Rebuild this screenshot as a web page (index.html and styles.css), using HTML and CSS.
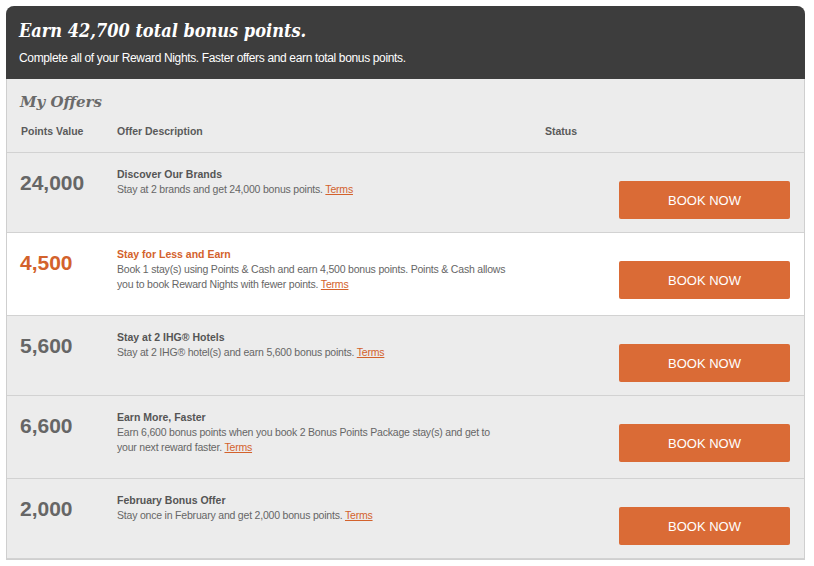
FILE: index.html
```html
<!DOCTYPE html>
<html>
<head>
    <title>My Offers</title>
    <link rel="stylesheet" href="styles.css">
</head>
<body>
    <div class="offers-panel">
        <div class="offers-banner">
            <h1>Earn 42,700 total bonus points.</h1>
            <p>Complete all of your Reward Nights. Faster offers and earn total bonus points.</p>
        </div>
        <div class="offers-head">
            <h2>My Offers</h2>
            <div class="offer-grid col-titles">
                <span>Points Value</span>
                <span>Offer Description</span>
                <span>Status</span>
                <span></span>
            </div>
        </div>
        <div class="offer-grid offer-row">
            <div class="points">24,000</div>
            <div class="desc">
                <h3>Discover Our Brands</h3>
                <p>Stay at 2 brands and get 24,000 bonus points. <a href="#">Terms</a></p>
            </div>
            <div class="status"></div>
            <button class="book-btn">BOOK NOW</button>
        </div>
        <div class="offer-grid offer-row featured">
            <div class="points">4,500</div>
            <div class="desc">
                <h3>Stay for Less and Earn</h3>
                <p>Book 1 stay(s) using Points &amp; Cash and earn 4,500 bonus points. Points &amp; Cash allows you to book Reward Nights with fewer points. <a href="#">Terms</a></p>
            </div>
            <div class="status"></div>
            <button class="book-btn">BOOK NOW</button>
        </div>
        <div class="offer-grid offer-row">
            <div class="points">5,600</div>
            <div class="desc">
                <h3>Stay at 2 IHG&reg; Hotels</h3>
                <p>Stay at 2 IHG&reg; hotel(s) and earn 5,600 bonus points. <a href="#">Terms</a></p>
            </div>
            <div class="status"></div>
            <button class="book-btn">BOOK NOW</button>
        </div>
        <div class="offer-grid offer-row">
            <div class="points">6,600</div>
            <div class="desc">
                <h3>Earn More, Faster</h3>
                <p>Earn 6,600 bonus points when you book 2 Bonus Points Package stay(s) and get to your next reward faster. <a href="#">Terms</a></p>
            </div>
            <div class="status"></div>
            <button class="book-btn">BOOK NOW</button>
        </div>
        <div class="offer-grid offer-row">
            <div class="points">2,000</div>
            <div class="desc">
                <h3>February Bonus Offer</h3>
                <p>Stay once in February and get 2,000 bonus points. <a href="#">Terms</a></p>
            </div>
            <div class="status"></div>
            <button class="book-btn">BOOK NOW</button>
        </div>
    </div>
</body>
</html>
```
FILE: styles.css
```css
body {
    font-family: "Liberation Sans", Arial, sans-serif;
    background-color: #fff;
    margin: 0;
    padding: 6px 9px 0 6px;
}
.offers-panel {
    border: 1px solid #cfcfcf;
    border-top: none;
    border-radius: 8px 8px 0 0;
    background-color: #ececec;
}
.offers-banner {
    background-color: #3d3d3d;
    color: #fff;
    border-radius: 8px 8px 0 0;
    padding: 13px 13px 14px;
    margin: 0 -1px;
    height: 46px;
}
.offers-banner h1 {
    font-family: "DejaVu Serif", Georgia, serif;
    font-stretch: condensed;
    font-style: italic;
    font-weight: bold;
    font-size: 18px;
    line-height: 24px;
    margin: 0;
}
.offers-banner p {
    font-size: 12px;
    letter-spacing: -0.35px;
    margin: 7px 0 0;
    line-height: 16px;
}
.offers-head {
    padding: 14px 0 0;
    border-bottom: 1px solid #d2d2d2;
}
.offers-head h2 {
    font-family: "DejaVu Serif", Georgia, serif;
    font-style: italic;
    font-weight: bold;
    font-size: 15px;
    color: #6a6a6a;
    margin: 0 0 0 13px;
    line-height: 18px;
}
.offer-grid {
    display: grid;
    grid-template-columns: 97px 428px 74px 171px;
    padding: 0 14px 0 13px;
}
.col-titles {
    font-size: 10.5px;
    font-weight: bold;
    color: #5a5a5a;
    padding-top: 13px;
    padding-bottom: 14px;
    line-height: 14px;
}
.col-titles span:first-child {
    padding-left: 1px;
}
.offer-row {
    border-bottom: 1px solid #d2d2d2;
    align-items: start;
    padding-top: 14px;
    padding-bottom: 13px;
}
.offer-row.featured {
    background-color: #fff;
}
.points {
    font-size: 21px;
    font-weight: bold;
    color: #666;
    line-height: 24px;
    padding-top: 4px;
}
.featured .points,
.featured .desc h3 {
    color: #d3622c;
}
.desc {
    padding-bottom: 10px;
    padding-right: 36px;
}
.desc h3 {
    font-size: 10.5px;
    font-weight: bold;
    color: #555;
    margin: 0;
    line-height: 15px;
}
.desc p {
    font-size: 10.5px;
    letter-spacing: -0.2px;
    color: #666;
    margin: 0;
    line-height: 15px;
}
.desc a {
    color: #d3622c;
}
.book-btn {
    margin-top: 14px;
    height: 38px;
    background-color: #da6b36;
    color: #fff;
    border: none;
    border-radius: 2px;
    font-family: "Liberation Sans", Arial, sans-serif;
    font-size: 13px;
    cursor: pointer;
}
```
